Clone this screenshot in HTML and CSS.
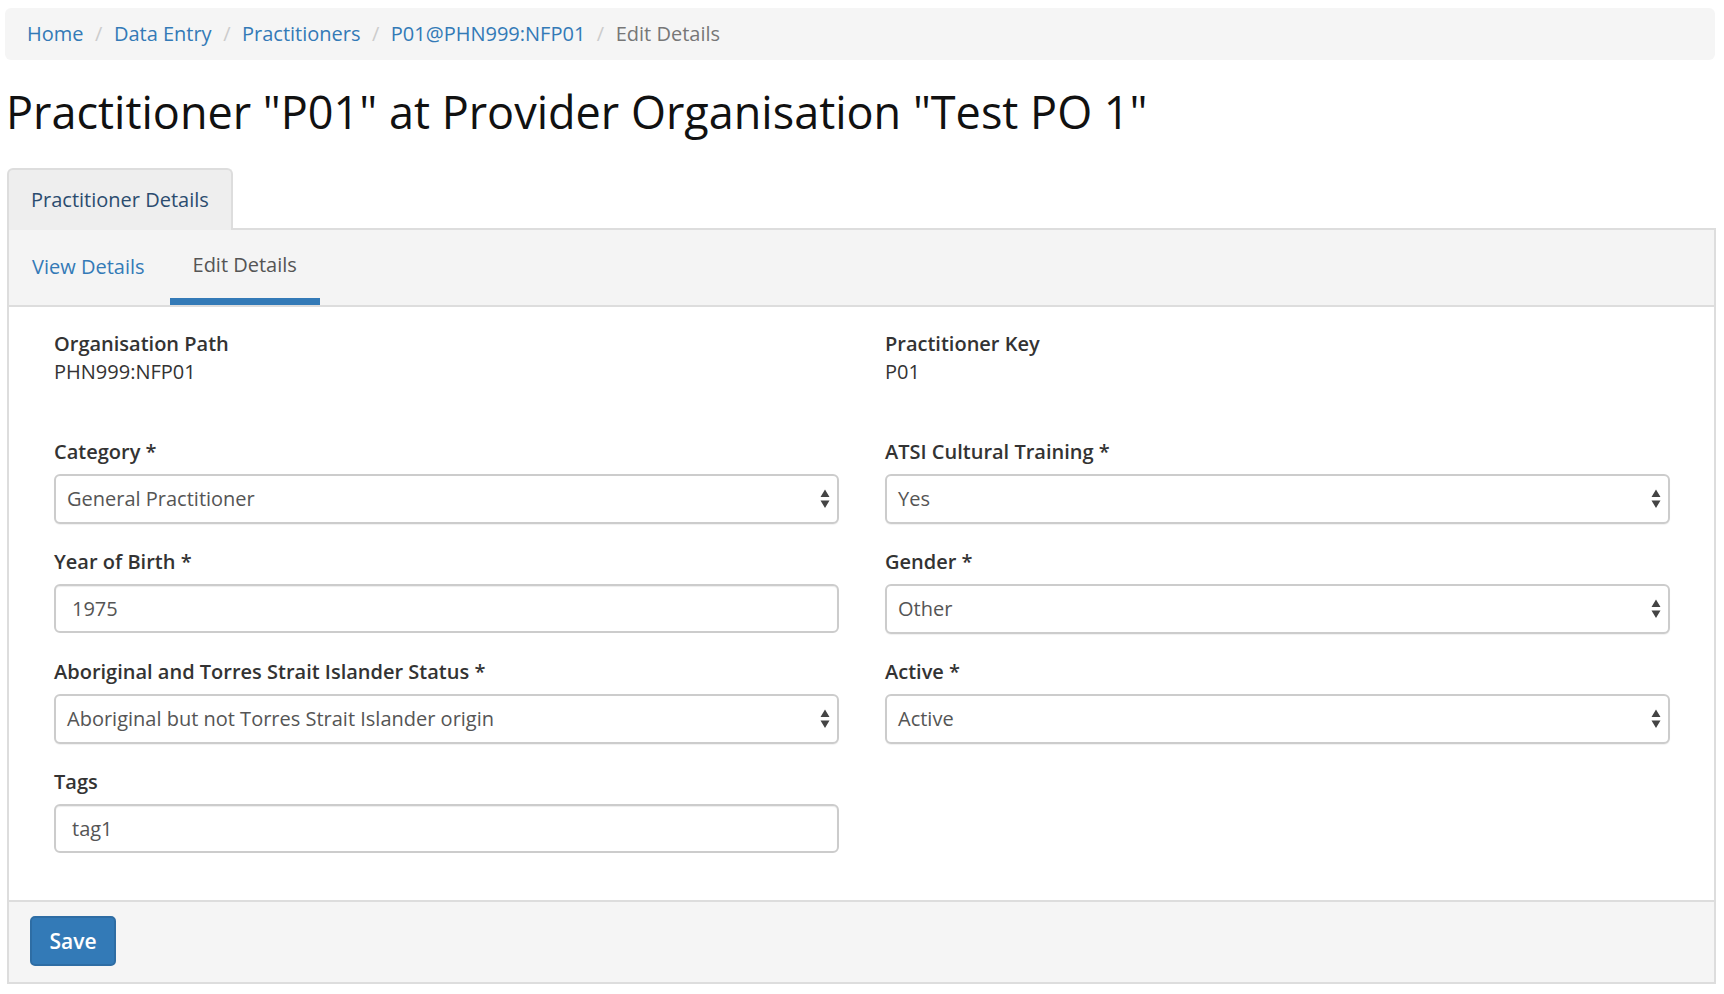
FILE: index.html
```html
<!DOCTYPE html>
<html>
<head>
<meta charset="utf-8">
<link rel="stylesheet" href="styles.css">
</head>
<body>
<div class="page">
  <ol class="breadcrumb">
    <li><a href="#">Home</a></li>
    <li class="sep">/</li>
    <li><a href="#">Data Entry</a></li>
    <li class="sep">/</li>
    <li><a href="#">Practitioners</a></li>
    <li class="sep">/</li>
    <li><a href="#">P01@PHN999:NFP01</a></li>
    <li class="sep">/</li>
    <li class="current">Edit Details</li>
  </ol>

  <h1 class="title">Practitioner "P01" at Provider Organisation "Test PO 1"</h1>

  <div class="tabs">
    <div class="tab">Practitioner Details</div>
  </div>

  <div class="panel">
    <div class="subnav">
      <a href="#" class="subtab">View Details</a>
      <span class="subtab active">Edit Details</span>
    </div>

    <div class="panel-body">
      <div class="grid static">
        <div class="group">
          <div class="lbl">Organisation Path</div>
          <div class="val">PHN999:NFP01</div>
        </div>
        <div class="group">
          <div class="lbl">Practitioner Key</div>
          <div class="val">P01</div>
        </div>
      </div>

      <div class="grid">
        <div class="group">
          <div class="lbl">Category *</div>
          <div class="select">
            <span class="select-text">General Practitioner</span>
            <svg class="arrows" width="10" height="20" viewBox="0 0 10 20"><path d="M5 0.5 L9.5 8 L0.5 8 Z M0.5 11.5 L9.5 11.5 L5 19 Z" fill="#444"/></svg>
          </div>
        </div>
        <div class="group">
          <div class="lbl">ATSI Cultural Training *</div>
          <div class="select">
            <span class="select-text">Yes</span>
            <svg class="arrows" width="10" height="20" viewBox="0 0 10 20"><path d="M5 0.5 L9.5 8 L0.5 8 Z M0.5 11.5 L9.5 11.5 L5 19 Z" fill="#444"/></svg>
          </div>
        </div>

        <div class="group">
          <div class="lbl">Year of Birth *</div>
          <div class="input">1975</div>
        </div>
        <div class="group">
          <div class="lbl">Gender *</div>
          <div class="select">
            <span class="select-text">Other</span>
            <svg class="arrows" width="10" height="20" viewBox="0 0 10 20"><path d="M5 0.5 L9.5 8 L0.5 8 Z M0.5 11.5 L9.5 11.5 L5 19 Z" fill="#444"/></svg>
          </div>
        </div>

        <div class="group">
          <div class="lbl">Aboriginal and Torres Strait Islander Status *</div>
          <div class="select">
            <span class="select-text">Aboriginal but not Torres Strait Islander origin</span>
            <svg class="arrows" width="10" height="20" viewBox="0 0 10 20"><path d="M5 0.5 L9.5 8 L0.5 8 Z M0.5 11.5 L9.5 11.5 L5 19 Z" fill="#444"/></svg>
          </div>
        </div>
        <div class="group">
          <div class="lbl">Active *</div>
          <div class="select">
            <span class="select-text">Active</span>
            <svg class="arrows" width="10" height="20" viewBox="0 0 10 20"><path d="M5 0.5 L9.5 8 L0.5 8 Z M0.5 11.5 L9.5 11.5 L5 19 Z" fill="#444"/></svg>
          </div>
        </div>

        <div class="group">
          <div class="lbl">Tags</div>
          <div class="input">tag1</div>
        </div>
        <div class="group"></div>
      </div>
    </div>

    <div class="panel-footer">
      <button class="btn">Save</button>
    </div>
  </div>
</div>
</body>
</html>
```

FILE: styles.css
```css
html, body {
  margin: 0;
  padding: 0;
  background: #fff;
}

body {
  font-family: "Open Sans", "Liberation Sans", sans-serif;
  font-size: 20px;
  line-height: 28px;
  color: #333;
}

.page {
  padding: 8px 8px 0 6px;
}

a {
  color: #337ab7;
  text-decoration: none;
}

.breadcrumb {
  list-style: none;
  margin: 0 1px 0 -1px;
  padding: 12px 22px;
  height: 28px;
  background: #f5f5f5;
  border-radius: 6px;
  display: flex;
  align-items: center;
}

.breadcrumb li {
  display: block;
}

.breadcrumb .sep {
  color: #ccc;
  margin: 0 11.5px;
}

.breadcrumb .current {
  color: #777;
}

.title {
  font-size: 45px;
  font-weight: 400;
  line-height: 50px;
  color: #111;
  margin: 27px 0 31px 0;
  letter-spacing: 0;
}

.tabs {
  display: flex;
  margin-bottom: -2px;
}

.tab {
  position: relative;
  z-index: 1;
  margin-left: 1px;
  background: #eee;
  border: 2px solid #ddd;
  border-bottom: none;
  border-radius: 6px 6px 0 0;
  padding: 16px 22px 16px 22px;
  color: #2b4c6f;
}

.panel {
  margin-left: 1px;
  border: 2px solid #ddd;
  background: #fff;
}

.subnav {
  display: flex;
  align-items: flex-start;
  height: 75px;
  background: #f4f4f4;
  border-bottom: 2px solid #ddd;
  gap: 2px;
}

.subtab {
  display: block;
  padding: 23px 23px 0 23px;
}

.subtab.active {
  padding: 21px 23px 19px 23px;
  border-bottom: 7px solid #337ab7;
  color: #555;
}

.panel-body {
  padding: 23px 44px 23px 45px;
}

.grid {
  display: grid;
  grid-template-columns: 1fr 1fr;
  column-gap: 46px;
}

.grid.static {
  margin-bottom: 52px;
}

.grid.static .group {
  margin-bottom: 0;
}

.group {
  margin-bottom: 24px;
}

.lbl {
  font-weight: 600;
  color: #333;
  margin-bottom: 8px;
}

.static .lbl {
  margin-bottom: 0;
}

.val {
  color: #333;
}

.select,
.input {
  position: relative;
  box-sizing: border-box;
  border: 2px solid #ccc;
  border-radius: 6px;
  background: #fff;
  color: #555;
  display: flex;
  align-items: center;
}

.select {
  height: 50px;
  padding: 0 12px 0 11px;
  box-shadow: 0 1px 1px rgba(0, 0, 0, 0.06);
}

.input {
  height: 49px;
  padding: 0 16px;
  box-shadow: inset 0 1px 1px rgba(0, 0, 0, 0.075);
}

.arrows {
  position: absolute;
  right: 7px;
  top: 13px;
}

.panel-footer {
  background: #f5f5f5;
  border-top: 2px solid #ddd;
  padding: 14px 21px 16px 21px;
}

.btn {
  font-family: "Open Sans", "Liberation Sans", sans-serif;
  font-size: 21px;
  font-weight: 600;
  color: #fff;
  background: #337ab7;
  border: 2px solid #2e6da4;
  border-radius: 5px;
  width: 86px;
  height: 50px;
  padding: 0;
  display: block;
}
```
